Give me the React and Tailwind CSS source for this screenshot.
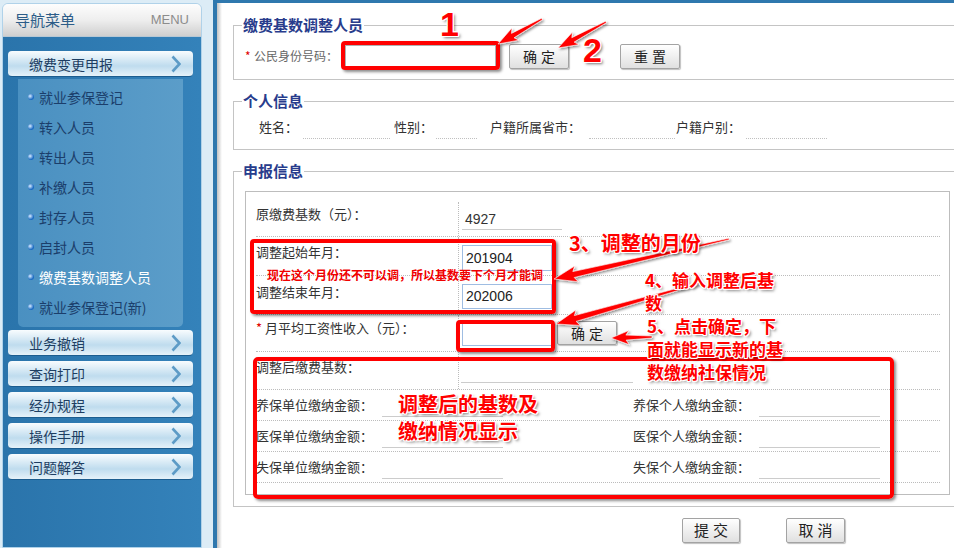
import React from "react";

function arrowPoints(x1, y1, x2, y2, hl = 18, hw = 8, w0 = 1.5, w1 = 5) {
  const dx = x2 - x1, dy = y2 - y1;
  const len = Math.hypot(dx, dy);
  const ux = dx / len, uy = dy / len;
  const nx = -uy, ny = ux;
  const bx = x2 - ux * hl, by = y2 - uy * hl;
  const pts = [
    [x1 + (nx * w0) / 2, y1 + (ny * w0) / 2],
    [bx + (nx * w1) / 2, by + (ny * w1) / 2],
    [bx - ux * 3 + nx * hw, by - uy * 3 + ny * hw],
    [x2, y2],
    [bx - ux * 3 - nx * hw, by - uy * 3 - ny * hw],
    [bx - (nx * w1) / 2, by - (ny * w1) / 2],
    [x1 - (nx * w0) / 2, y1 - (ny * w0) / 2],
  ];
  return pts.map((p) => p.map((v) => v.toFixed(1)).join(",")).join(" ");
}

const ARROWS = [
  [542, 19, 498, 44, 17, 7, 1.5, 5],
  [606, 22, 558, 48, 17, 7, 1.5, 5],
  [729, 239, 554, 279, 20, 8, 1.5, 6],
  [700, 283, 556, 324, 20, 8, 1.5, 6],
  [652, 337, 611, 338, 15, 7, 2, 5],
];

function MenuBtn({ label }) {
  return (
    <div className="ml-[5px] w-[185px] h-[26px] shrink-0 rounded-[4px] border-b border-[#1c5d8f] bg-linear-to-b from-[#f8fcfe] via-[#bfdcee] via-60% to-[#e6f2f9] flex items-center justify-between pl-[21px] pr-[12px]">
      <span className="text-[14px] leading-[20px] text-[#1d3e62]">{label}</span>
      <svg width="10" height="18" viewBox="0 0 10 18">
        <polyline points="1.5,1.5 8.5,9 1.5,16.5" fill="none" stroke="#5d9bc6" strokeWidth="2.6" />
      </svg>
    </div>
  );
}

function SubItem({ label, active }) {
  return (
    <div className="h-[30px] flex items-center pl-[10px]">
      <span className="w-[6px] h-[6px] rounded-full bg-[radial-gradient(circle_at_35%_35%,#d8ecff,#1b6ac2_65%)] mr-[5px]" />
      <span className={"text-[14px] leading-[20px] " + (active ? "text-white" : "text-[#1b3e6b]")}>{label}</span>
    </div>
  );
}

function GrayBtn({ a, b, w = "w-[60px]", h = "h-[25px]", size = "text-[14px]" }) {
  return (
    <div className={w + " " + h + " " + size + " shrink-0 rounded-[2px] border border-[#a3a3a3] bg-linear-to-b from-white to-[#e0e0e0] shadow-[1px_1px_1px_rgba(0,0,0,0.25)] flex items-center justify-center gap-[4px] text-[#222]"}>
      <span>{a}</span>
      <span>{b}</span>
    </div>
  );
}

function Legend({ children }) {
  return (
    <legend className="ml-[8px] px-[1px] text-[15px] leading-[20px] font-bold text-[#283c8c]">{children}</legend>
  );
}

const dotB = "border-b border-dotted border-[#bcbcbc]";
const label13 = "text-[13px] leading-[18px] text-[#333]";

function AmountRow({ a, b }) {
  return (
    <div className={"h-[31px] flex " + dotB}>
      <div className={"w-[126px] pt-[6px] " + label13}>{a}</div>
      <div className="w-[121px] h-[27px] border-b border-[#cccccc]" />
      <div className="w-[130px]" />
      <div className={"w-[126px] pt-[6px] " + label13}>{b}</div>
      <div className="w-[121px] h-[27px] border-b border-[#cccccc]" />
    </div>
  );
}

const annoShadow =
  "[text-shadow:-1px_-1px_0_#fff,1px_-1px_0_#fff,-1px_1px_0_#fff,1px_1px_0_#fff,0_-1px_0_#fff,0_1px_0_#fff,-1px_0_0_#fff,1px_0_0_#fff,2px_2px_3px_rgba(0,0,0,0.55)]";

export default function App() {
  return (
    <div className="relative w-[954px] h-[548px] overflow-hidden flex bg-white font-['Noto_Sans_CJK_SC','Noto_Sans',sans-serif]">
      {/* Sidebar */}
      <div className="w-[213px] h-full shrink-0 bg-[#dcecf6] pt-[3px] pl-[2px] flex flex-col">
        <div className="w-[200px] flex-1 flex flex-col rounded-t-[6px] border border-[#b0d2e9] overflow-hidden">
          <div className="h-[33px] shrink-0 flex items-center justify-between pl-[12px] pr-[12px] bg-linear-to-b from-[#fdfdfd] via-[#eeeeee] to-[#cfcfcf] border-b border-[#b8c8d4]">
            <span className="text-[15px] text-[#2c5c88]">导航菜单</span>
            <span className="text-[13px] text-[#8c8c8c] font-['Liberation_Sans',sans-serif]">MENU</span>
          </div>
          <div className="flex-1 flex flex-col bg-linear-to-r from-[#2a74ab] to-[#3482ba] pt-[14px]">
            <MenuBtn label="缴费变更申报" />
            <div className="ml-[15px] mt-[2px] w-[165px] h-[248px] rounded-b-[5px] bg-linear-to-r from-[#4a90c1] to-[#5b9dc9] pt-[3px]">
              <SubItem label="就业参保登记" />
              <SubItem label="转入人员" />
              <SubItem label="转出人员" />
              <SubItem label="补缴人员" />
              <SubItem label="封存人员" />
              <SubItem label="启封人员" />
              <SubItem label="缴费基数调整人员" active />
              <SubItem label="就业参保登记(新)" />
            </div>
            <div className="mt-[3px] flex flex-col gap-[5px]">
              <MenuBtn label="业务撤销" />
              <MenuBtn label="查询打印" />
              <MenuBtn label="经办规程" />
              <MenuBtn label="操作手册" />
              <MenuBtn label="问题解答" />
            </div>
          </div>
        </div>
      </div>

      {/* Main */}
      <div className="flex-1 h-full flex border-t-[3px] border-[#2f78ae] overflow-hidden">
        <div className="w-[4px] shrink-0 bg-[#2f78ae]" />
        <div className="w-[5px] shrink-0 bg-linear-to-r from-[#c2c2c2] to-white" />
        <div className="flex-1 bg-white pl-[11px] pt-[12px] overflow-hidden">
          {/* Fieldset 1 */}
          <fieldset className="w-[729px] min-w-0 border border-[#c4c4c4]">
            <Legend>缴费基数调整人员</Legend>
            <div className="pt-[8px] pb-[10px] pl-[11px] h-[44px] flex items-center">
              <span className="w-[9px] text-[12px] text-[#e00000]">*</span>
              <span className="w-[91px] text-[12px] text-[#666]">公民身份号码：</span>
              <div className="w-[151px] h-[22px] border border-[#b0b0b0] bg-white" />
              <div className="ml-[13px]">
                <GrayBtn a="确" b="定" />
              </div>
              <div className="ml-[51px]">
                <GrayBtn a="重" b="置" />
              </div>
            </div>
          </fieldset>

          {/* Fieldset 2 */}
          <fieldset className="mt-[11px] w-[729px] min-w-0 border border-[#c4c4c4]">
            <Legend>个人信息</Legend>
            <div className="pt-[4px] pb-[10px] pl-[25px] flex items-start">
              <span className="w-[44px] text-[13px] leading-[24px] text-[#333]">姓名：</span>
              <span className="w-[87px] h-[24px] border-b border-dotted border-[#c0c0c0]" />
              <span className="ml-[4px] w-[42px] text-[13px] leading-[24px] text-[#333]">性别：</span>
              <span className="w-[41px] h-[24px] border-b border-dotted border-[#c0c0c0]" />
              <span className="ml-[13px] w-[99px] text-[13px] leading-[24px] text-[#333]">户籍所属省市：</span>
              <span className="w-[86px] h-[24px] border-b border-dotted border-[#c0c0c0]" />
              <span className="ml-[1px] w-[70px] text-[13px] leading-[24px] text-[#333]">户籍户别：</span>
              <span className="w-[81px] h-[24px] border-b border-dotted border-[#c0c0c0]" />
            </div>
          </fieldset>

          {/* Fieldset 3 */}
          <fieldset className="mt-[11px] w-[729px] min-w-0 border border-[#c4c4c4]">
            <Legend>申报信息</Legend>
            <div className="pt-[10px] pb-[11px] pl-[11px]">
              <div className="w-[705px] border border-[#bdbdbd] pt-[10px] pb-[11px] pl-[10px] pr-[9px]">
                {/* Row A */}
                <div className={"h-[35px] flex " + dotB}>
                  <div className={"w-[203px] border-r border-dotted border-[#bcbcbc] pt-[3px] " + label13}>原缴费基数（元）：</div>
                  <div className="pl-[3px] pt-[8px]">
                    <div className="w-[100px] h-[20px] border-b border-[#cccccc] pl-[3px] text-[14px] leading-[18px] text-[#333] font-['Liberation_Sans',sans-serif]">4927</div>
                  </div>
                </div>
                {/* Row B */}
                <div className={"h-[39px] flex " + dotB}>
                  <div className={"w-[203px] border-r border-dotted border-[#bcbcbc] pt-[6px] " + label13}>调整起始年月：</div>
                  <div className="pl-[3px] pt-[7px]">
                    <input readOnly value="201904" className="w-[90px] h-[26px] border border-[#9fbde2] pl-[3px] text-[14px] text-[#222] font-['Liberation_Sans',sans-serif] outline-none" />
                  </div>
                </div>
                {/* Row C */}
                <div className={"h-[39px] flex " + dotB}>
                  <div className={"w-[203px] border-r border-dotted border-[#bcbcbc] pt-[7px] " + label13}>调整结束年月：</div>
                  <div className="pl-[3px] pt-[6px]">
                    <input readOnly value="202006" className="w-[90px] h-[25px] border border-[#9fbde2] pl-[3px] text-[14px] text-[#222] font-['Liberation_Sans',sans-serif] outline-none" />
                  </div>
                </div>
                {/* Row D */}
                <div className={"h-[37px] flex " + dotB}>
                  <div className={"w-[203px] border-r border-dotted border-[#bcbcbc] pt-[4px] " + label13}>
                    <span className="text-[#e00000] mr-[3px]">*</span>月平均工资性收入（元）：
                  </div>
                  <div className="pl-[3px] pt-[5px] flex items-start">
                    <div className="w-[90px] h-[26px] border border-[#9fbde2] bg-white" />
                    <div className="ml-[5px] mt-[1px]">
                      <GrayBtn a="确" b="定" h="h-[24px]" />
                    </div>
                  </div>
                </div>
                {/* Row E */}
                <div className={"h-[38px] flex " + dotB}>
                  <div className={"w-[203px] border-r border-dotted border-[#bcbcbc] pt-[6px] " + label13}>调整后缴费基数：</div>
                  <div className="pl-[2px]">
                    <div className="w-[172px] h-[31px] border-b border-[#cccccc]" />
                  </div>
                </div>
                <AmountRow a="养保单位缴纳金额：" b="养保个人缴纳金额：" />
                <AmountRow a="医保单位缴纳金额：" b="医保个人缴纳金额：" />
                <AmountRow a="失保单位缴纳金额：" b="失保个人缴纳金额：" />
              </div>
            </div>
          </fieldset>

          <div className="mt-[11px] pl-[449px] flex gap-[46px]">
            <GrayBtn a="提" b="交" w="w-[58px]" size="text-[15px]" />
            <GrayBtn a="取" b="消" w="w-[59px]" size="text-[15px]" />
          </div>
        </div>
      </div>

      {/* Annotation overlay */}
      <div className="absolute inset-0 pointer-events-none">
        <div className="absolute left-[341px] top-[41px] w-[159px] h-[29px] border-4 border-[#ff0000] rounded-[4px] shadow-[2px_2px_3px_rgba(0,0,0,0.45)]" />
        <div className="absolute left-[250px] top-[239px] w-[306px] h-[75px] border-4 border-[#ff0000] rounded-[4px] shadow-[2px_2px_3px_rgba(0,0,0,0.45)]" />
        <div className="absolute left-[456px] top-[320px] w-[99px] h-[32px] border-4 border-[#ff0000] rounded-[4px] shadow-[2px_2px_3px_rgba(0,0,0,0.45)]" />
        <div className="absolute left-[253px] top-[357px] w-[641px] h-[142px] border-4 border-[#ff0000] rounded-[5px] shadow-[2px_2px_3px_rgba(0,0,0,0.45)]" />

        <svg className="absolute inset-0" width="954" height="548" viewBox="0 0 954 548">
          <defs>
            <filter id="ash" x="-20%" y="-50%" width="140%" height="200%">
              <feDropShadow dx="1.5" dy="1.5" stdDeviation="1.2" floodColor="#000" floodOpacity="0.45" />
            </filter>
          </defs>
          {ARROWS.map((a, i) => (
            <polygon key={i} points={arrowPoints(...a)} fill="#ff0000" stroke="#fff" strokeWidth="0.6" filter="url(#ash)" />
          ))}
        </svg>

        <div className="absolute left-[267px] top-[268px] text-[12px] leading-[14px] font-bold text-[#f00000] whitespace-nowrap">
          现在这个月份还不可以调，所以基数要下个月才能调
        </div>

        <div className={"absolute left-[440px] top-[7px] text-[34px] leading-[34px] font-bold text-[#ff0000] font-['Liberation_Sans',sans-serif] " + annoShadow}>1</div>
        <div className={"absolute left-[583px] top-[33px] text-[34px] leading-[34px] font-bold text-[#ff0000] font-['Liberation_Sans',sans-serif] " + annoShadow}>2</div>

        <div className={"absolute left-[569px] top-[231px] text-[20px] leading-[24px] font-bold text-[#ff0000] whitespace-nowrap " + annoShadow}>3、调整的月份</div>
        <div className={"absolute left-[645px] top-[268px] text-[17px] leading-[23px] font-bold text-[#ff0000] whitespace-nowrap " + annoShadow}>
          4、输入调整后基<br />数
        </div>
        <div className={"absolute left-[647px] top-[314px] text-[17px] leading-[23px] font-bold text-[#ff0000] whitespace-nowrap " + annoShadow}>
          5、点击确定，下<br />面就能显示新的基<br />数缴纳社保情况
        </div>
        <div className={"absolute left-[398px] top-[390px] text-[20px] leading-[27px] font-bold text-[#ff0000] whitespace-nowrap " + annoShadow}>
          调整后的基数及<br />缴纳情况显示
        </div>
      </div>
    </div>
  );
}
